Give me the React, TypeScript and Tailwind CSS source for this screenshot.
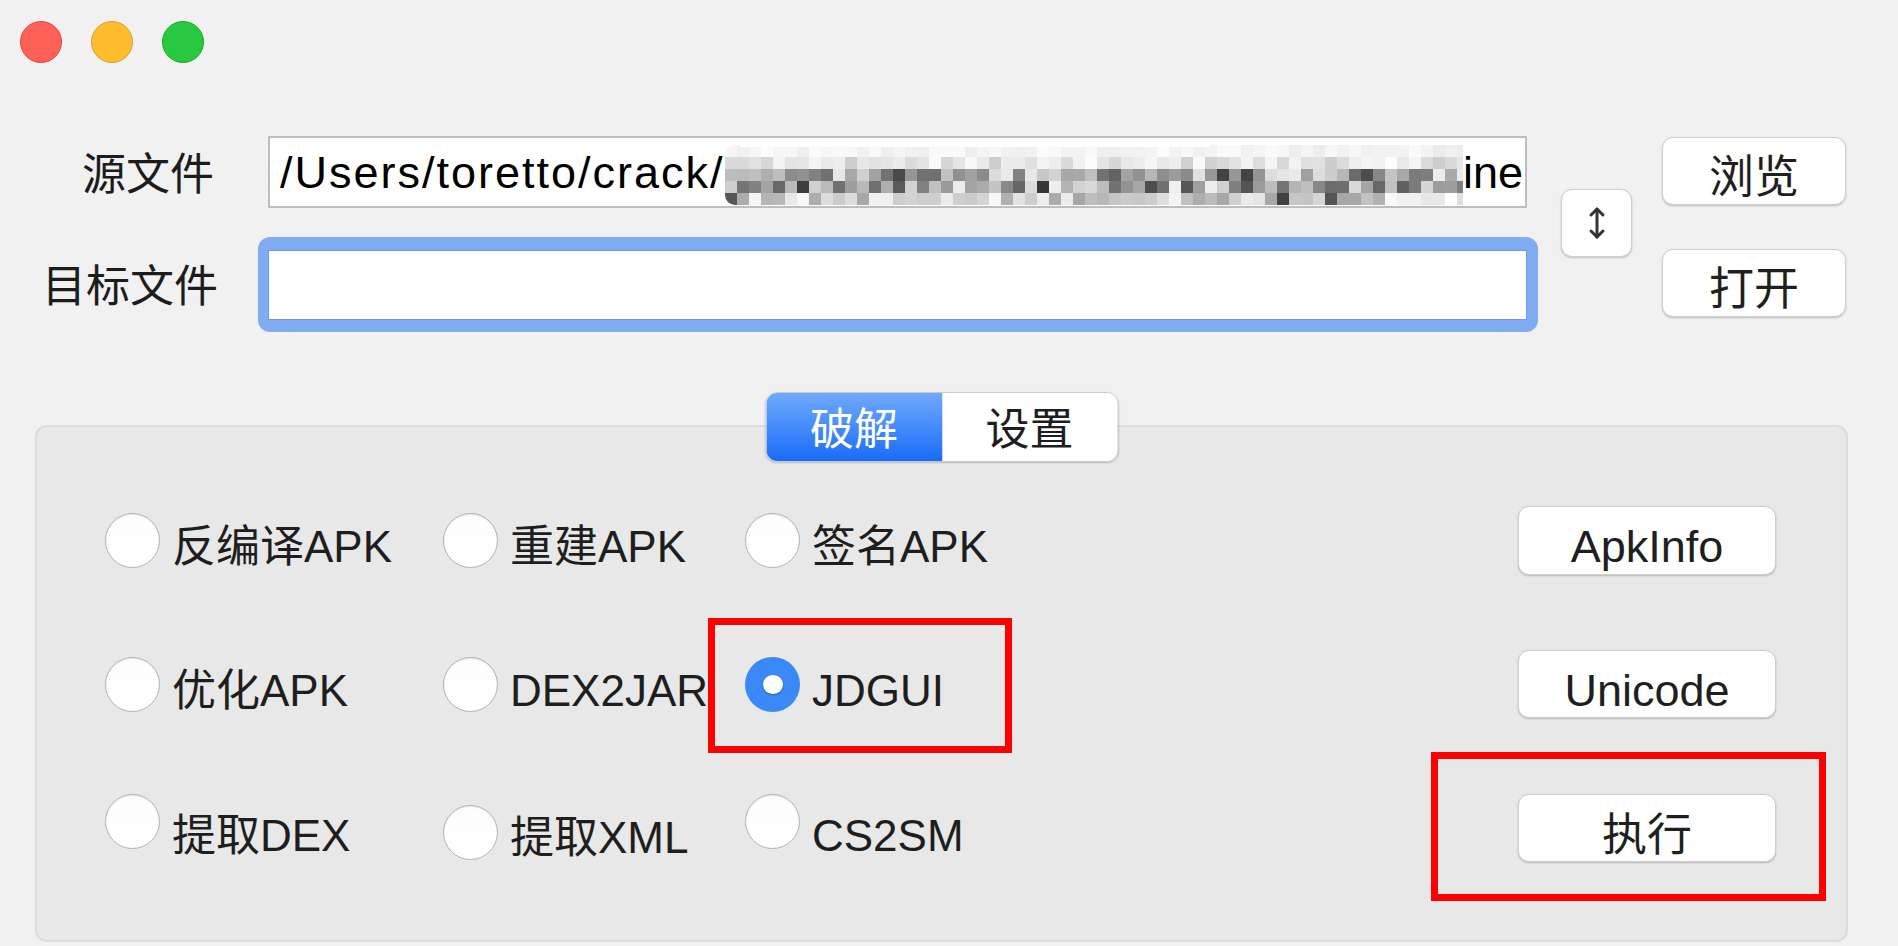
import React from "react";

const FONT = {
  fontFamily: '"Liberation Sans", "Noto Sans CJK SC", sans-serif',
};

function makeMosaic() {
  let seed = 12345;
  const rnd = () => {
    seed = (seed * 1103515245 + 12345) % 2147483648;
    return seed / 2147483648;
  };
  const ranges: [number, number][] = [
    [236, 252],
    [205, 252],
    [95, 235],
    [95, 240],
    [165, 250],
  ];
  return ranges.map(([lo, hi], r) =>
    Array.from({ length: 64 }, (_, c) => {
      let v = lo + rnd() * (hi - lo);
      if (r >= 2 && rnd() < 0.06) v = 50 + rnd() * 40;
      if (c > 58 && r >= 2) v = Math.min(255, v + 30);
      const g = Math.round(v);
      return `rgb(${g},${g},${g})`;
    })
  );
}

const MOSAIC = makeMosaic();

function Mosaic() {
  return (
    <div className="flex-1 min-w-0 h-[60px] mt-[6px] flex flex-col overflow-hidden rounded-l-[10px]">
      {MOSAIC.map((row, i) => (
        <div key={i} className="flex h-[12px] shrink-0">
          {row.map((c, j) => (
            <div key={j} className="w-[12px] h-[12px] shrink-0" style={{ backgroundColor: c }} />
          ))}
        </div>
      ))}
    </div>
  );
}

function MacButton({ children, className = "" }: { children: React.ReactNode; className?: string }) {
  return (
    <div
      className={
        "flex items-center justify-center bg-white rounded-[11px] border border-[#cfcfcf] shadow-[0_1px_2px_rgba(0,0,0,0.22)] text-[45px] text-[#1f1f1f] leading-none " +
        className
      }
    >
      {children}
    </div>
  );
}

function Radio({ checked = false, className = "" }: { checked?: boolean; className?: string }) {
  if (checked) {
    return (
      <div className={"w-[55px] h-[55px] rounded-full bg-[#3b89f6] flex items-center justify-center shrink-0 " + className}>
        <div className="w-[20px] h-[19px] rounded-full bg-white shadow-[0_1px_2px_rgba(0,0,0,0.35)]" />
      </div>
    );
  }
  return (
    <div
      className={
        "w-[55px] h-[55px] rounded-full bg-linear-to-b from-[#fdfdfd] to-[#ffffff] border border-[#b3b3b3] shadow-[inset_0_1px_1px_rgba(0,0,0,0.08)] shrink-0 " +
        className
      }
    />
  );
}

function RadioItem({
  label,
  checked,
  width,
  radioClass = "",
  textClass = "mt-[14px]",
}: {
  label: string;
  checked?: boolean;
  width: string;
  radioClass?: string;
  textClass?: string;
}) {
  return (
    <div className={"flex items-center gap-[12px] shrink-0 " + width}>
      <Radio checked={checked} className={radioClass} />
      <span className={"text-[44px] leading-[1.15] text-[#1e1e1e] whitespace-nowrap " + textClass}>{label}</span>
    </div>
  );
}

export default function App() {
  return (
    <div className="w-[1898px] h-[946px] bg-[#f1f1f1] overflow-hidden relative" style={FONT}>
      {/* traffic lights */}
      <div className="flex gap-[29px] pl-[20px] pt-[21px]">
        <div className="w-[42px] h-[42px] rounded-full bg-[#fe5f57] border border-[#e2463f]" />
        <div className="w-[42px] h-[42px] rounded-full bg-[#febc2e] border border-[#dea123]" />
        <div className="w-[42px] h-[42px] rounded-full bg-[#28c840] border border-[#1aab29]" />
      </div>

      {/* form */}
      <div className="flex items-start mt-[73px]">
        <div className="flex flex-col w-[1538px]">
          <div className="flex items-center h-[72px]">
            <div className="w-[214px] text-right text-[44px] leading-none text-[#1c1c1c] mt-[5px]">源文件</div>
            <div className="ml-[54px] w-[1259px] h-[72px] bg-white border-2 border-[#bdbdbd] flex items-center pl-[10px] overflow-hidden relative">
              <span className="text-[45px] leading-none tracking-[2px] text-black whitespace-nowrap">/Users/toretto/crack/</span>
              <Mosaic />
              <span className="text-[45px] leading-none text-black whitespace-nowrap pr-[2px]">ine</span>
              <div className="absolute -top-[3px] left-[470px] w-[470px] h-[12px] bg-white rounded-tl-[30px] rounded-tr-[6px]" />
            </div>
          </div>
          <div className="flex items-center mt-[29px]">
            <div className="w-[218px] text-right text-[44px] leading-none text-[#1c1c1c] mt-[5px]">目标文件</div>
            <div className="ml-[40px] w-[1280px] h-[95px] rounded-[12px] bg-[#82acf2] pl-[10px] pr-[11px] pt-[13px] pb-[12px]">
              <div className="w-full h-full bg-white border border-[#6f99e2]" />
            </div>
          </div>
        </div>

        <MacButton className="ml-[23px] mt-[53px] w-[71px] h-[68px]">
          <svg width="20" height="34" viewBox="0 0 20 34" fill="none">
            <path d="M10 3 L10 31" stroke="#333" strokeWidth="3" strokeLinecap="round" />
            <path d="M4 9 L10 3 L16 9" stroke="#333" strokeWidth="3" strokeLinecap="round" strokeLinejoin="round" />
            <path d="M4 25 L10 31 L16 25" stroke="#333" strokeWidth="3" strokeLinecap="round" strokeLinejoin="round" />
          </svg>
        </MacButton>

        <div className="ml-[30px] mt-[1px] flex flex-col gap-[44px]">
          <MacButton className="w-[184px] h-[68px] pt-[12px]">浏览</MacButton>
          <MacButton className="w-[184px] h-[68px] pt-[12px]">打开</MacButton>
        </div>
      </div>

      {/* group box */}
      <div className="ml-[35px] mt-[93px] w-[1813px] h-[517px] relative rounded-[12px] bg-[#e8e8e8] border-2 border-[#dcdcdc]">
        <div className="absolute -top-[35px] left-1/2 -translate-x-1/2 flex w-[353px] h-[70px] rounded-[12px] border border-[#c9c9c9] shadow-[0_1px_2px_rgba(0,0,0,0.2)] overflow-hidden">
          <div className="w-[176px] h-full bg-linear-to-b from-[#6ea9fb] to-[#176afb] flex items-center justify-center text-white text-[44px] leading-none pt-[5px]">
            破解
          </div>
          <div className="flex-1 h-full bg-white flex items-center justify-center text-[#1e1e1e] text-[44px] leading-none pt-[5px]">
            设置
          </div>
        </div>

        <div className="pt-[41px] pl-[68px] pr-[70px] flex flex-col">
          <div className="flex items-center h-[144px]">
            <RadioItem label="反编译APK" width="w-[338px]" />
            <RadioItem label="重建APK" width="w-[302px]" />
            <RadioItem label="签名APK" width="w-[300px]" />
            <MacButton className="ml-auto w-[258px] h-[69px] pt-[12px]">ApkInfo</MacButton>
          </div>
          <div className="flex items-center h-[144px]">
            <RadioItem label="优化APK" width="w-[338px]" />
            <div className="w-[302px] flex items-center gap-[12px] shrink-0">
              <Radio />
              <span className="text-[44px] leading-[1.15] text-[#1e1e1e] whitespace-nowrap w-[198px] overflow-hidden mt-[14px]">DEX2JAR</span>
            </div>
            <RadioItem label="JDGUI" width="w-[300px]" checked />
            <MacButton className="ml-auto w-[258px] h-[68px] pt-[12px]">Unicode</MacButton>
          </div>
          <div className="flex items-center h-[144px]">
            <RadioItem label="提取DEX" width="w-[338px]" radioClass="-mt-[14px]" textClass="mt-[16px]" />
            <RadioItem label="提取XML" width="w-[302px]" radioClass="mt-[8px]" textClass="mt-[20px]" />
            <RadioItem label="CS2SM" width="w-[300px]" radioClass="-mt-[14px]" textClass="mt-[16px]" />
            <MacButton className="ml-auto w-[258px] h-[68px] pt-[14px]">执行</MacButton>
          </div>
        </div>
      </div>

      {/* red annotation boxes */}
      <div className="absolute left-[708px] top-[618px] w-[304px] h-[135px] border-[7px] border-[#ff0000]" />
      <div className="absolute left-[1431px] top-[752px] w-[395px] h-[149px] border-[7px] border-[#ff0000]" />
    </div>
  );
}
